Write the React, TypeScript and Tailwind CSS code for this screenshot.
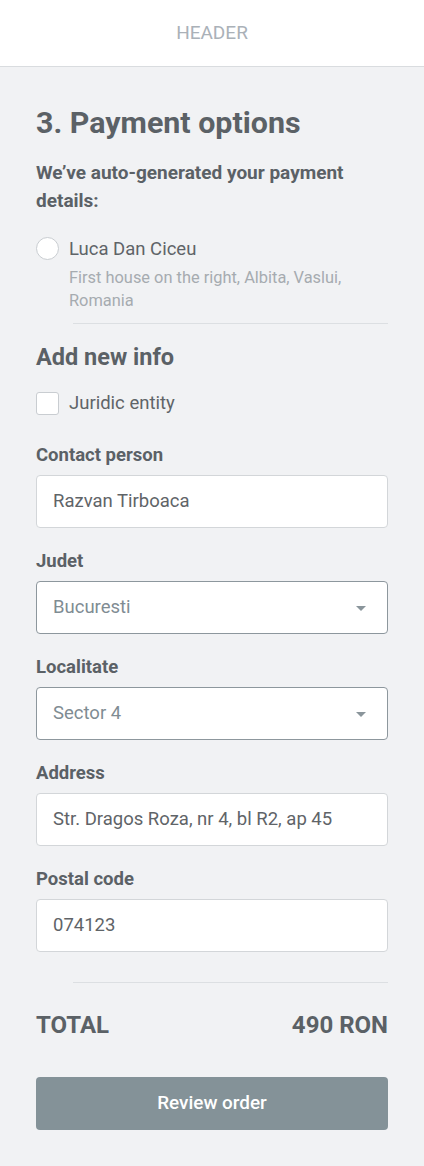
import React from "react";

const Label = ({ children }: { children: React.ReactNode }) => (
  <div className="text-[18.5px] font-bold leading-[22px] text-[#5b6166]">{children}</div>
);

const Input = ({ value }: { value: string }) => (
  <div className="mt-[9px] flex h-[53px] items-center rounded-[4px] border border-[#d3d6d9] bg-white px-[16px] text-[18.5px] text-[#5f6468]">
    {value}
  </div>
);

const Select = ({ value }: { value: string }) => (
  <div className="mt-[9px] flex h-[53px] items-center justify-between rounded-[4px] border border-[#8d979d] bg-white pl-[16px] pr-[21px] text-[18.5px] text-[#7f8c93]">
    <span>{value}</span>
    <svg width="10" height="5" viewBox="0 0 10 5" className="mt-[1px]">
      <path d="M0 0 L10 0 L5 5 Z" fill="#8a959b" />
    </svg>
  </div>
);

export default function App() {
  return (
    <div className="min-h-[1166px] bg-[#f1f2f4]" style={{ fontFamily: "Roboto, 'Liberation Sans', sans-serif" }}>
      <div className="flex h-[67px] items-center justify-center border-b border-[#d9dcdf] bg-white">
        <span className="text-[19px] text-[#aab1b8]">HEADER</span>
      </div>
      <div className="px-9 pt-[38px] pb-9">
        <h1 className="text-[30.4px] font-bold leading-[36px] text-[#5b6166]">3. Payment options</h1>
        <p className="mt-[18px] text-[19px] font-bold leading-[28px] text-[#5b6166]">
          We’ve auto-generated your payment details:
        </p>
        <div className="mt-[22px] flex gap-[10px]">
          <div className="h-[23px] w-[23px] shrink-0 rounded-full border border-[#c9cdd1] bg-white" />
          <div>
            <div className="text-[18.5px] leading-[24px] text-[#5f6468]">Luca Dan Ciceu</div>
            <div className="mt-[5px] text-[16.4px] leading-[23px] text-[#a6abb0]">
              First house on the right, Albita, Vaslui, Romania
            </div>
          </div>
        </div>
        <div className="ml-[37px] mt-[11px] h-px bg-[#dcdfe2]" />
        <h2 className="mt-[19px] text-[23.5px] font-bold leading-[28px] text-[#5b6166]">Add new info</h2>
        <div className="mt-[20px] flex items-center gap-[10px]">
          <div className="h-[23px] w-[23px] shrink-0 rounded-[3px] border border-[#c9cdd1] bg-white" />
          <span className="text-[18.5px] leading-[24px] text-[#5f6468]">Juridic entity</span>
        </div>
        <div className="mt-[29px]">
          <Label>Contact person</Label>
          <Input value="Razvan Tirboaca" />
        </div>
        <div className="mt-[22px]">
          <Label>Judet</Label>
          <Select value="Bucuresti" />
        </div>
        <div className="mt-[22px]">
          <Label>Localitate</Label>
          <Select value="Sector 4" />
        </div>
        <div className="mt-[22px]">
          <Label>Address</Label>
          <Input value="Str. Dragos Roza, nr 4, bl R2, ap 45" />
        </div>
        <div className="mt-[22px]">
          <Label>Postal code</Label>
          <Input value="074123" />
        </div>
        <div className="ml-[37px] mt-[30px] h-px bg-[#dcdfe2]" />
        <div className="mt-[28px] flex items-center justify-between text-[24px] font-bold leading-[28px] text-[#5b6166]">
          <span>TOTAL</span>
          <span>490 RON</span>
        </div>
        <button className="mt-[38px] flex h-[53px] w-full items-center justify-center rounded-[4px] bg-[#849298] text-[18.9px] font-medium text-white">
          Review order
        </button>
      </div>
    </div>
  );
}
